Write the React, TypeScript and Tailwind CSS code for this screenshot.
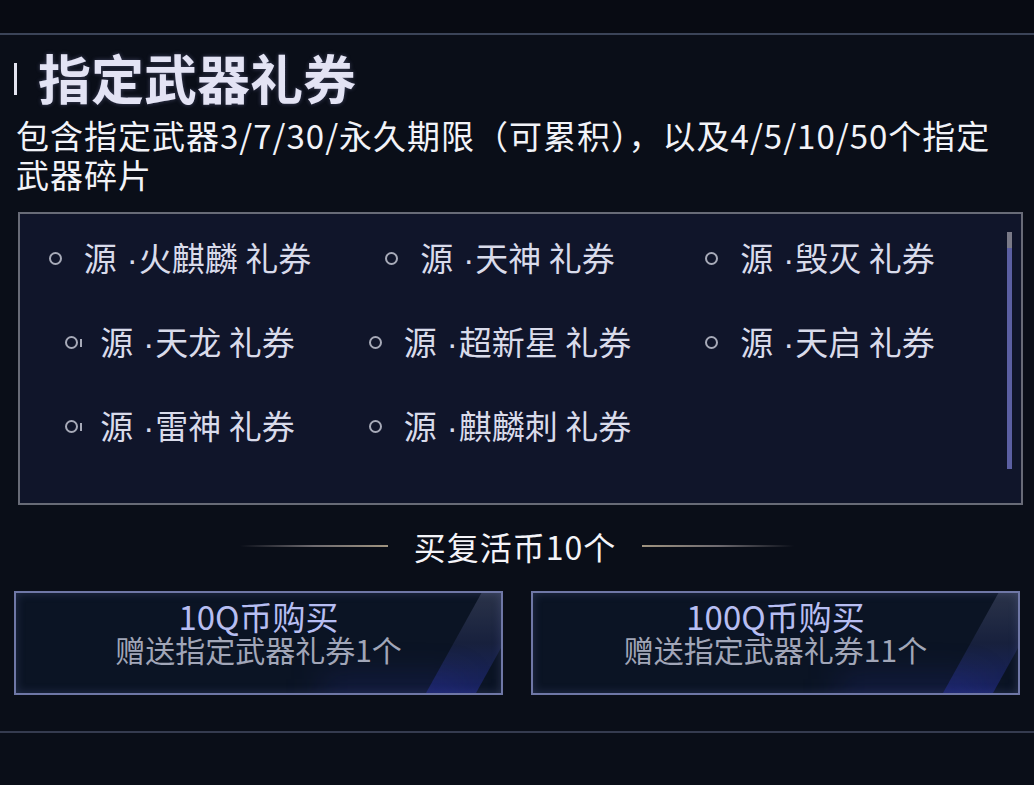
const items = [
  ["源", "火麒麟 礼券"],
  ["源", "天神 礼券"],
  ["源", "毁灭 礼券"],
  ["源", "天龙 礼券"],
  ["源", "超新星 礼券"],
  ["源", "天启 礼券"],
  ["源", "雷神 礼券"],
  ["源", "麒麟刺 礼券"],
];

function Bullet({ tick }: { tick?: boolean }) {
  return (
    <span className="relative flex h-[13px] w-[13px] shrink-0 items-center">
      <span className="h-[13px] w-[13px] rounded-full border-[2px] border-[#a7aab8]" />
      {tick && <span className="absolute right-[-4px] top-[3px] h-[8px] w-[2px] bg-[#a7aab8]" />}
    </span>
  );
}

function BuyButton({ price, gift }: { price: string; gift: string }) {
  return (
    <div className="relative h-[104px] flex-1 overflow-hidden border-[2px] border-[#6f77a6] bg-[#0b1424] shadow-[inset_0_0_10px_rgba(120,130,200,0.25)]">
      <div className="absolute bottom-0 right-[25px] top-0 w-[50px] origin-bottom -skew-x-[29deg] bg-gradient-to-b from-[#8a90b8]/25 via-[#4a52a0]/20 to-[#2d36c0]/40" />
      <div className="absolute bottom-[-12px] right-[40px] h-[28px] w-[140px] bg-[#2a35a0]/25 blur-lg" />
      <div className="relative flex flex-col items-center pt-[6px]">
        <span className="text-[33px] leading-[34px] text-[#b7bef2]">{price}</span>
        <span className="text-[30px] leading-[32px] text-[#a1a6b8]">{gift}</span>
      </div>
    </div>
  );
}

export default function App() {
  return (
    <div
      className="h-[785px] w-[1034px] overflow-hidden bg-[#0a0e18]"
      style={{ fontFamily: '"Noto Sans CJK SC", "Noto Sans", sans-serif' }}
    >
      <div className="h-[33px] bg-[#080b13]" />
      <div className="h-[2px] bg-[#3b4458]" />

      <div className="px-[14px]">
        <div className="mt-[11px] flex items-center">
          <span className="mt-[4px] h-[32px] w-[3px] bg-[#e4e4f0]" />
          <h1 className="ml-[21px] text-[53px] font-bold leading-[62px] text-[#e3e3f4] [text-shadow:0_0_4px_rgba(170,170,230,0.35)]">
            指定武器礼券
          </h1>
        </div>
        <p className="ml-[2px] mt-[8px] w-[1005px] text-[33px] leading-[39px] tracking-[1px] text-[#f2f3f8]">
          包含指定武器3/7/30/永久期限（可累积），以及4/5/10/50个指定武器碎片
        </p>

        <div className="relative ml-[4px] mt-[18px] h-[293px] w-[1005px] border-[2px] border-[#686b77] bg-[#10152a]">
          <div className="grid grid-cols-[320px_320px_320px] pt-[2px]">
            {items.map(([a, b], i) => (
              <div key={b} className="flex h-[84px] items-center justify-center">
                <Bullet tick={i === 3 || i === 6} />
                <span className="ml-[22px] text-[33px] leading-none text-[#d9dbea]">
                  {a}
                  <span className="ml-[10px] mr-[1px]" style={{ fontFamily: '"Liberation Sans", sans-serif' }}>·</span>
                  {b}
                </span>
              </div>
            ))}
          </div>
          <div className="absolute right-[9px] top-[18px] h-[237px] w-[5px] bg-[#5b5fa2]">
            <div className="h-[16px] bg-[#7a7a88]" />
          </div>
        </div>

        <div className="mt-[21px] flex items-center justify-center">
          <span className="h-[2px] w-[148px] bg-gradient-to-r from-transparent via-[#6f6b70] to-[#a09480]" />
          <span className="mx-[26px] text-[32px] leading-[40px] tracking-[1px] text-[#f4f4f8]">买复活币10个</span>
          <span className="h-[2px] w-[152px] bg-gradient-to-r from-[#a09480] via-[#6f6b70] to-transparent" />
        </div>

        <div className="mt-[25px] flex gap-[28px]">
          <BuyButton price="10Q币购买" gift="赠送指定武器礼券1个" />
          <BuyButton price="100Q币购买" gift="赠送指定武器礼券11个" />
        </div>
      </div>

      <div className="mt-[36px] h-[2px] bg-[#353b4f]" />
    </div>
  );
}
